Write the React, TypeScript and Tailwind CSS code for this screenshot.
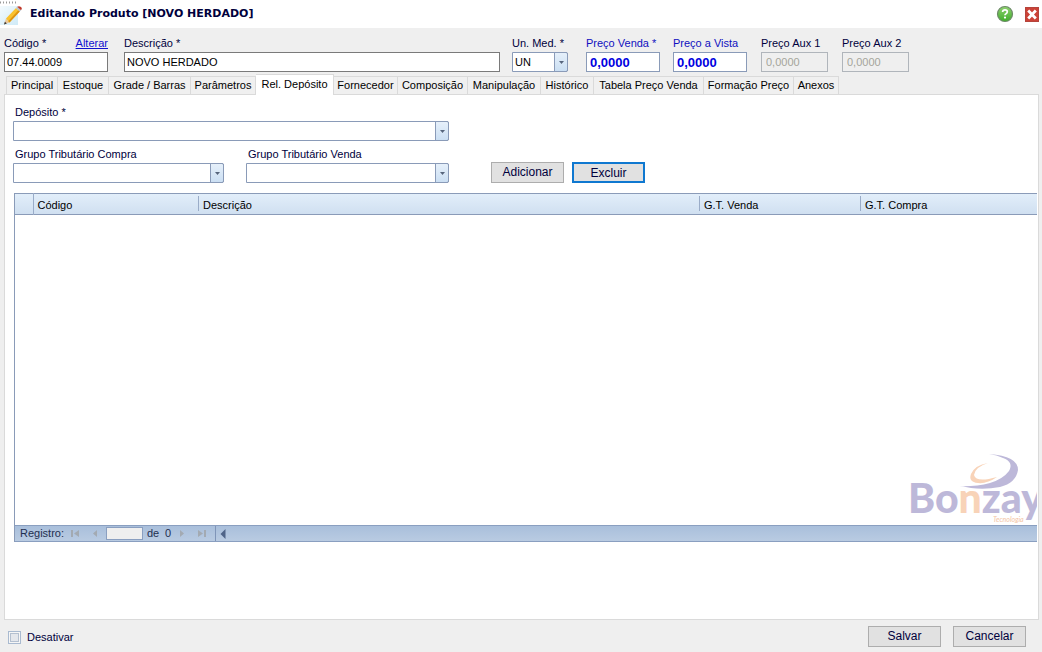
import { useId, useState } from 'react';

const tabs = [
  { label: 'Principal', width: 'w-[52px]' },
  { label: 'Estoque', width: 'w-[51px]' },
  { label: 'Grade / Barras', width: 'w-[82px]' },
  { label: 'Parâmetros', width: 'w-[65px]' },
  { label: 'Rel. Depósito', width: 'w-[78px]' },
  { label: 'Fornecedor', width: 'w-[64px]' },
  { label: 'Composição', width: 'w-[70px]' },
  { label: 'Manipulação', width: 'w-[73px]' },
  { label: 'Histórico', width: 'w-[53px]' },
  { label: 'Tabela Preço Venda', width: 'w-[110px]' },
  { label: 'Formação Preço', width: 'w-[90px]' },
  { label: 'Anexos', width: 'w-[45px]' },
];

const PencilIcon = () => (
  <svg width="22" height="26" viewBox="0 0 22 26" className="shrink-0" aria-hidden="true">
    <defs>
      <linearGradient id="pencilSky" x1="0" y1="0" x2="1" y2="1">
        <stop offset="0" stopColor="#f4fbfe" />
        <stop offset="1" stopColor="#cfeaf7" />
      </linearGradient>
    </defs>
    <path d="M0 1.500H17" stroke="#9a9a9a" strokeWidth="2" strokeDasharray="1 2" />
    <rect x="0" y="5" width="18" height="19" fill="url(#pencilSky)" />
    <path d="M4 23.500L6 17.500L9.500 21.500Z" fill="#e9c79a" />
    <path d="M4 23.500L4.900 20.800L6.800 22.500Z" fill="#333" />
    <path d="M6 17.500L16 7L19.800 10.500L9.500 21.500Z" fill="#f9c22e" />
    <path d="M8.200 20.300L18.400 9.200L19.800 10.500L9.500 21.500Z" fill="#dd9312" />
    <path d="M16 7L17.200 5.800L21 9.200L19.800 10.500Z" fill="#b9c4cc" />
    <path d="M17.200 5.800Q19 4.500 21 6Q22.600 7.500 21 9.200Z" fill="#c0392b" />
  </svg>
);

const HelpIcon = () => (
  <svg width="18" height="18" viewBox="0 0 18 18" aria-hidden="true">
    <defs>
      <linearGradient id="helpGreen" x1="0" y1="0" x2="0" y2="1">
        <stop offset="0" stopColor="#8fd070" />
        <stop offset="1" stopColor="#3fae2a" />
      </linearGradient>
    </defs>
    <circle cx="9" cy="9" r="7.500" fill="url(#helpGreen)" stroke="#6d8a68" strokeWidth="1.200" />
    <path
      d="M6.600 7Q6.700 4.900 9 4.900Q11.300 4.900 11.300 6.800Q11.300 8 10 8.700Q9 9.200 9 10.300"
      fill="none"
      stroke="#fff"
      strokeWidth="1.700"
    />
    <circle cx="9" cy="12.600" r="1.100" fill="#fff" />
  </svg>
);

const CloseIcon = () => (
  <svg width="14" height="15" viewBox="0 0 14 15" aria-hidden="true">
    <rect x="0.500" y="0.500" width="13" height="14" fill="#cb4237" stroke="#b5443b" />
    <path d="M3.200 3.500L10.800 11.500M10.800 3.500L3.200 11.500" stroke="#fff" strokeWidth="2.800" />
  </svg>
);

const BonzayLogo = () => (
  <svg width="130" height="72" viewBox="0 0 130 72" aria-hidden="true">
    <text x="1" y="61" fontFamily="Lato, sans-serif" fontWeight="900" fontSize="41" fill="#bdb8d9">
      Bo<tspan fill="#f8d3b8">n</tspan>zay
    </text>
    <path
      d="M49 34Q68 35 83 31Q96 27 102 19Q107 10 96 6Q90 3 82 2Q111 4 111 18Q109 31 93 35Q78 38 64 36Q56 34 49 34Z"
      fill="#bdb8d9"
    />
    <path d="M81 11Q68 15 67 23Q69 31 90 25Q80 32 71 31Q61 30 64 22Q68 13 81 11Z" fill="#f8d3b8" />
    <text x="86" y="70" fontFamily="Lato, sans-serif" fontStyle="italic" fontSize="7" fill="#f3c4a4">
      Tecnologia
    </text>
  </svg>
);

type FieldProps = {
  label: string;
  value?: string;
  className?: string;
  labelClass?: string;
  inputClass?: string;
  disabled?: boolean;
  link?: string;
};

const Field = ({ label, value, className = '', labelClass = '', inputClass = '', disabled, link }: FieldProps) => {
  const id = useId();
  return (
    <div className={`flex flex-col ${className}`}>
      <div className="flex h-[17px] justify-between whitespace-nowrap leading-4">
        <label htmlFor={id} className={labelClass}>
          {label}
        </label>
        {link && (
          <a href="#alterar" className="text-[#1010d0] underline">
            {link}
          </a>
        )}
      </div>
      <input
        id={id}
        type="text"
        defaultValue={value}
        disabled={disabled}
        className={`h-5 w-full border outline-none ${inputClass}`}
      />
    </div>
  );
};

type ComboProps = {
  label: string;
  className?: string;
  labelClass?: string;
  options?: string[];
};

const Combo = ({ label, className = '', labelClass = '', options = [''] }: ComboProps) => {
  const id = useId();
  return (
    <div className={`flex flex-col ${className}`}>
      <label htmlFor={id} className={`h-[17px] whitespace-nowrap leading-4 ${labelClass}`}>
        {label}
      </label>
      <div className="relative">
        <select
          id={id}
          className="block h-5 w-full appearance-none rounded-r-[2px] border border-[#8a9bb8] bg-white px-[2px] text-black outline-none"
        >
          {options.map((option) => (
            <option key={option}>{option}</option>
          ))}
        </select>
        <span className="pointer-events-none absolute inset-y-0 right-0 flex w-[14px] items-center justify-center rounded-r-[2px] border border-[#8a9bb8] bg-linear-to-b from-[#e6f0fa] to-[#cbdff3]">
          <svg width="5" height="3" viewBox="0 0 5 3" aria-hidden="true">
            <path d="M0 0H5L2.500 3Z" fill="#56657c" />
          </svg>
        </span>
      </div>
    </div>
  );
};

type ButtonProps = {
  label: string;
  focused?: boolean;
};

const Button = ({ label, focused }: ButtonProps) => (
  <button
    type="button"
    className={`h-[21px] w-[73px] bg-[#e1e1e1] text-[12px] leading-none text-[#00003c] ${
      focused ? 'border-2 border-[#0f78d0]' : 'border border-[#adadad] pb-px'
    }`}
  >
    {label}
  </button>
);

const PagerButton = ({ label, path }: { label: string; path: string }) => (
  <button type="button" aria-label={label} className="flex h-4 w-[10px] items-center justify-center">
    <svg width="9" height="7" viewBox="0 0 9 7" aria-hidden="true">
      <path d={path} fill="#a3aab2" />
    </svg>
  </button>
);

const App = () => {
  const [activeTab, setActiveTab] = useState('Rel. Depósito');

  return (
    <div className="flex min-h-screen flex-col bg-[#efefef] font-['Liberation_Sans',Arial,sans-serif] text-[11px] text-[#00003c]">
      <header className="flex h-7 items-center bg-white pr-[3px]">
        <PencilIcon />
        <h1 className="flex-1 pl-2 font-['DejaVu_Sans',Verdana,sans-serif] text-[11px] font-bold">
          Editando Produto [NOVO HERDADO]
        </h1>
        <button type="button" aria-label="Ajuda" className="mr-[11px]">
          <HelpIcon />
        </button>
        <button type="button" aria-label="Fechar">
          <CloseIcon />
        </button>
      </header>

      <section className="flex px-1 pt-[7px]">
        <Field
          label="Código *"
          value="07.44.0009"
          link="Alterar"
          className="mr-4 w-[104px]"
          inputClass="border-[#7a7a7a] bg-white px-[2px] text-black"
        />
        <Field
          label="Descrição *"
          value="NOVO HERDADO"
          className="mr-3 max-w-[376px] flex-1"
          inputClass="border-[#7a7a7a] bg-white px-[2px] text-black"
        />
        <Combo label="Un. Med. *" options={['UN']} className="mr-[18px] w-14" />
        <Field
          label="Preço Venda *"
          value="0,0000"
          className="mr-[13px] w-[74px]"
          labelClass="text-[#1010c0]"
          inputClass="border-[#8a9bb8] bg-white px-[3px] text-[13px] font-bold text-[#0000e0]"
        />
        <Field
          label="Preço a Vista"
          value="0,0000"
          className="mr-[14px] w-[74px]"
          labelClass="text-[#1010c0]"
          inputClass="border-[#8a9bb8] bg-white px-[3px] text-[13px] font-bold text-[#0000e0]"
        />
        <Field
          label="Preço Aux 1"
          value="0,0000"
          disabled
          className="mr-[14px] w-[67px]"
          inputClass="border-[#b0b5bb] bg-[#efefef] px-[4px] text-[#a5a59b]"
        />
        <Field
          label="Preço Aux 2"
          value="0,0000"
          disabled
          className="w-[67px]"
          inputClass="border-[#b0b5bb] bg-[#efefef] px-[4px] text-[#a5a59b]"
        />
      </section>

      {/* the active tab covers the top border of the panel below */}
      <div role="tablist" className="relative z-10 -mb-px mt-[2px] flex h-[21px] items-end pl-[6px] text-black">
        {tabs.map((tab) => (
          <button
            key={tab.label}
            type="button"
            role="tab"
            aria-selected={tab.label === activeTab}
            onClick={() => setActiveTab(tab.label)}
            className={`whitespace-nowrap border-r border-t border-[#dadada] first:border-l ${tab.width} ${
              tab.label === activeTab ? 'h-[21px] bg-white pb-[2px]' : 'mb-px h-[18px] bg-[#f0f0f0]'
            }`}
          >
            {tab.label}
          </button>
        ))}
      </div>

      <main className="ml-1 mr-[3px] flex flex-1 flex-col border border-[#dadada] bg-white pb-[77px] pl-[8px] pr-[1px] pt-[9px]">
        <Combo label="Depósito *" className="w-[436px]" labelClass="pl-[2px]" />

        <div className="mt-[5px] flex items-end">
          <Combo label="Grupo Tributário Compra" className="mr-[22px] w-[211px]" labelClass="pl-[2px]" />
          <Combo label="Grupo Tributário Venda" className="mr-[42px] w-[203px]" labelClass="pl-[2px]" />
          <div className="flex gap-2">
            <Button label="Adicionar" />
            <Button label="Excluir" focused />
          </div>
        </div>

        <section className="relative ml-px mt-[10px] flex flex-1 flex-col border-l border-[#8a9bb8]">
          <table className="w-full table-fixed border-y border-[#8a9bb8] text-left text-black">
            <thead className="bg-linear-to-b from-[#e2eefa] to-[#cfdff0]">
              <tr className="h-5">
                <th className="w-[18px] border-r border-[#9aacc8]" aria-label="Seleção" />
                <th className="w-[165px] pl-1 pt-[3px] font-normal">Código</th>
                <th className="font-normal">
                  <div className="border-l border-[#9aacc8] pl-1 pt-[3px] leading-[12px]">Descrição</div>
                </th>
                <th className="w-[161px] font-normal">
                  <div className="border-l border-[#9aacc8] pl-1 pt-[3px] leading-[12px]">G.T. Venda</div>
                </th>
                <th className="w-[177px] font-normal">
                  <div className="border-l border-[#9aacc8] pl-1 pt-[3px] leading-[12px]">G.T. Compra</div>
                </th>
              </tr>
            </thead>
            <tbody />
          </table>

          <div className="flex-1" />

          <div className="pointer-events-none absolute bottom-[18px] right-0">
            <BonzayLogo />
          </div>

          <nav className="flex h-[17px] items-center border-y border-[#8a9fc0] bg-linear-to-b from-[#a9bfdb] to-[#b9cbe2] text-[#1f2f50]">
            <div className="flex h-full w-[201px] items-center border-r border-[#7f95b8] pl-[5px]">
              <label htmlFor="registro" className="w-[50px]">
                Registro:
              </label>
              <PagerButton label="Primeiro" path="M0 0H2V7H0ZM8 0V7L3 3.500Z" />
              <span className="w-[10px]" />
              <PagerButton label="Anterior" path="M6 0V7L2 3.500Z" />
              <input
                id="registro"
                type="text"
                className="ml-[6px] h-[13px] w-[37px] border border-[#8a9fc0] bg-[#efefef] px-[2px] outline-none"
              />
              <span className="ml-1 w-[18px]">de</span>
              <span className="w-[12px]">0</span>
              <PagerButton label="Próximo" path="M2 0V7L6 3.500Z" />
              <span className="w-[10px]" />
              <PagerButton label="Último" path="M0 0V7L5 3.500ZM6 0H8V7H6Z" />
            </div>
            <button type="button" aria-label="Rolar para a esquerda" className="ml-1">
              <svg width="6" height="10" viewBox="0 0 6 10" aria-hidden="true">
                <path d="M5.500 0V10L0.500 5Z" fill="#4f6488" />
              </svg>
            </button>
          </nav>
        </section>
      </main>

      <footer className="flex h-[32px] items-center pl-2 pr-4">
        <label className="flex flex-1 items-center gap-[6px] pt-[3px]">
          <input
            type="checkbox"
            className="h-[13px] w-[13px] appearance-none border border-[#a9bad0] bg-[#e4e7ec] shadow-[inset_0_0_0_1px_#f6f6f6,inset_0_0_0_2px_#b4c0d0] checked:bg-[#56657c]"
          />
          Desativar
        </label>
        <div className="flex gap-3">
          <Button label="Salvar" />
          <Button label="Cancelar" />
        </div>
      </footer>
    </div>
  );
};

export default App;
